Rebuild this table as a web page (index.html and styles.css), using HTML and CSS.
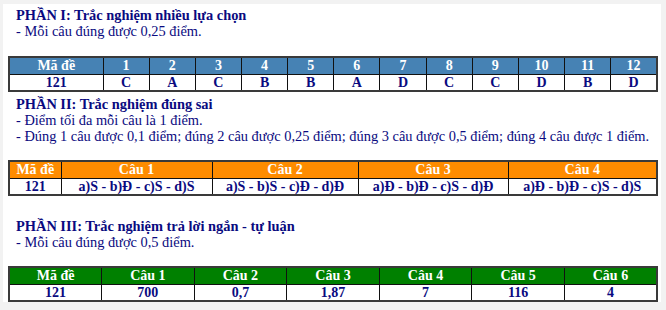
FILE: index.html
```html
<!DOCTYPE html>
<html lang="vi">
<head>
<meta charset="utf-8">
<link rel="stylesheet" href="styles.css">
</head>
<body>
<div class="sheet">
  <section class="part part-1">
    <p class="title">PHẦN I: Trắc nghiệm nhiều lựa chọn</p>
    <p class="note">- Mỗi câu đúng được 0,25 điểm.</p>
  </section>
  <table class="key key-blue">
    <colgroup><col class="c-code1"><col span="12"></colgroup>
    <thead><tr><th>Mã đề</th><th>1</th><th>2</th><th>3</th><th>4</th><th>5</th><th>6</th><th>7</th><th>8</th><th>9</th><th>10</th><th>11</th><th>12</th></tr></thead>
    <tbody><tr><td>121</td><td>C</td><td>A</td><td>C</td><td>B</td><td>B</td><td>A</td><td>D</td><td>C</td><td>C</td><td>D</td><td>B</td><td>D</td></tr></tbody>
  </table>

  <section class="part part-2">
    <p class="title">PHẦN II: Trắc nghiệm đúng sai</p>
    <p class="note">- Điểm tối đa mỗi câu là 1 điểm.</p>
    <p class="note">- Đúng 1 câu được 0,1 điểm; đúng 2 câu được 0,25 điểm; đúng 3 câu được 0,5 điểm; đúng 4 câu được 1 điểm.</p>
  </section>
  <table class="key key-orange">
    <colgroup><col class="c-code2"><col class="c-q2a"><col class="c-q2b"><col class="c-q2c"><col></colgroup>
    <thead><tr><th>Mã đề</th><th>Câu 1</th><th>Câu 2</th><th>Câu 3</th><th>Câu 4</th></tr></thead>
    <tbody><tr><td>121</td><td>a)S - b)Đ - c)S - d)S</td><td>a)S - b)S - c)Đ - d)Đ</td><td>a)Đ - b)Đ - c)S - d)Đ</td><td>a)Đ - b)Đ - c)S - d)S</td></tr></tbody>
  </table>

  <section class="part part-3">
    <p class="title">PHẦN III: Trắc nghiệm trả lời ngắn - tự luận</p>
    <p class="note">- Mỗi câu đúng được 0,5 điểm.</p>
  </section>
  <table class="key key-green">
    <colgroup><col span="7"></colgroup>
    <thead><tr><th>Mã đề</th><th>Câu 1</th><th>Câu 2</th><th>Câu 3</th><th>Câu 4</th><th>Câu 5</th><th>Câu 6</th></tr></thead>
    <tbody><tr><td>121</td><td>700</td><td>0,7</td><td>1,87</td><td>7</td><td>116</td><td>4</td></tr></tbody>
  </table>
</div>
</body>
</html>
```

FILE: styles.css
```css
* { box-sizing: border-box; }
html, body { margin: 0; padding: 0; }
body {
  background: #f2f2f2;
  font-family: "Liberation Serif", "Times New Roman", serif;
  color: #0a0a80;
  width: 666px;
  height: 310px;
  overflow: hidden;
}
.sheet {
  background: #ffffff;
  margin: 4px 5px 0 3px;
  height: 298px;
  padding: 3px 0 0 5px;
}
.part p { margin: 0; padding-left: 8px; font-size: 14.4px; line-height: 16px; }
.title { font-weight: bold; }
.part-1 { margin-bottom: 17px; }
.part-2 { margin-top: 4px; margin-bottom: 16px; }
.part-3 { margin-top: 22px; margin-bottom: 16px; }

.key {
  border-collapse: collapse;
  table-layout: fixed;
  width: 650px;
  border: 2px solid #3a3a3a;
  font-size: 14px;
}
.key th, .key td {
  border: 1px solid #111;
  height: 17px;
  padding: 0;
  text-align: center;
  font-weight: bold;
  line-height: 15px;
  white-space: nowrap;
}
.key th { color: #ffffff; }
.key td { color: #0a0a80; }
.key-blue th { background: #4682b4; }
.key-orange th { background: #ff8c00; }
.key-green th { background: #008000; }
.c-code1 { width: 94px; }
.c-code2 { width: 52px; }
.c-q2a { width: 151px; }
.c-q2b { width: 146px; }
.c-q2c { width: 150px; }
```
